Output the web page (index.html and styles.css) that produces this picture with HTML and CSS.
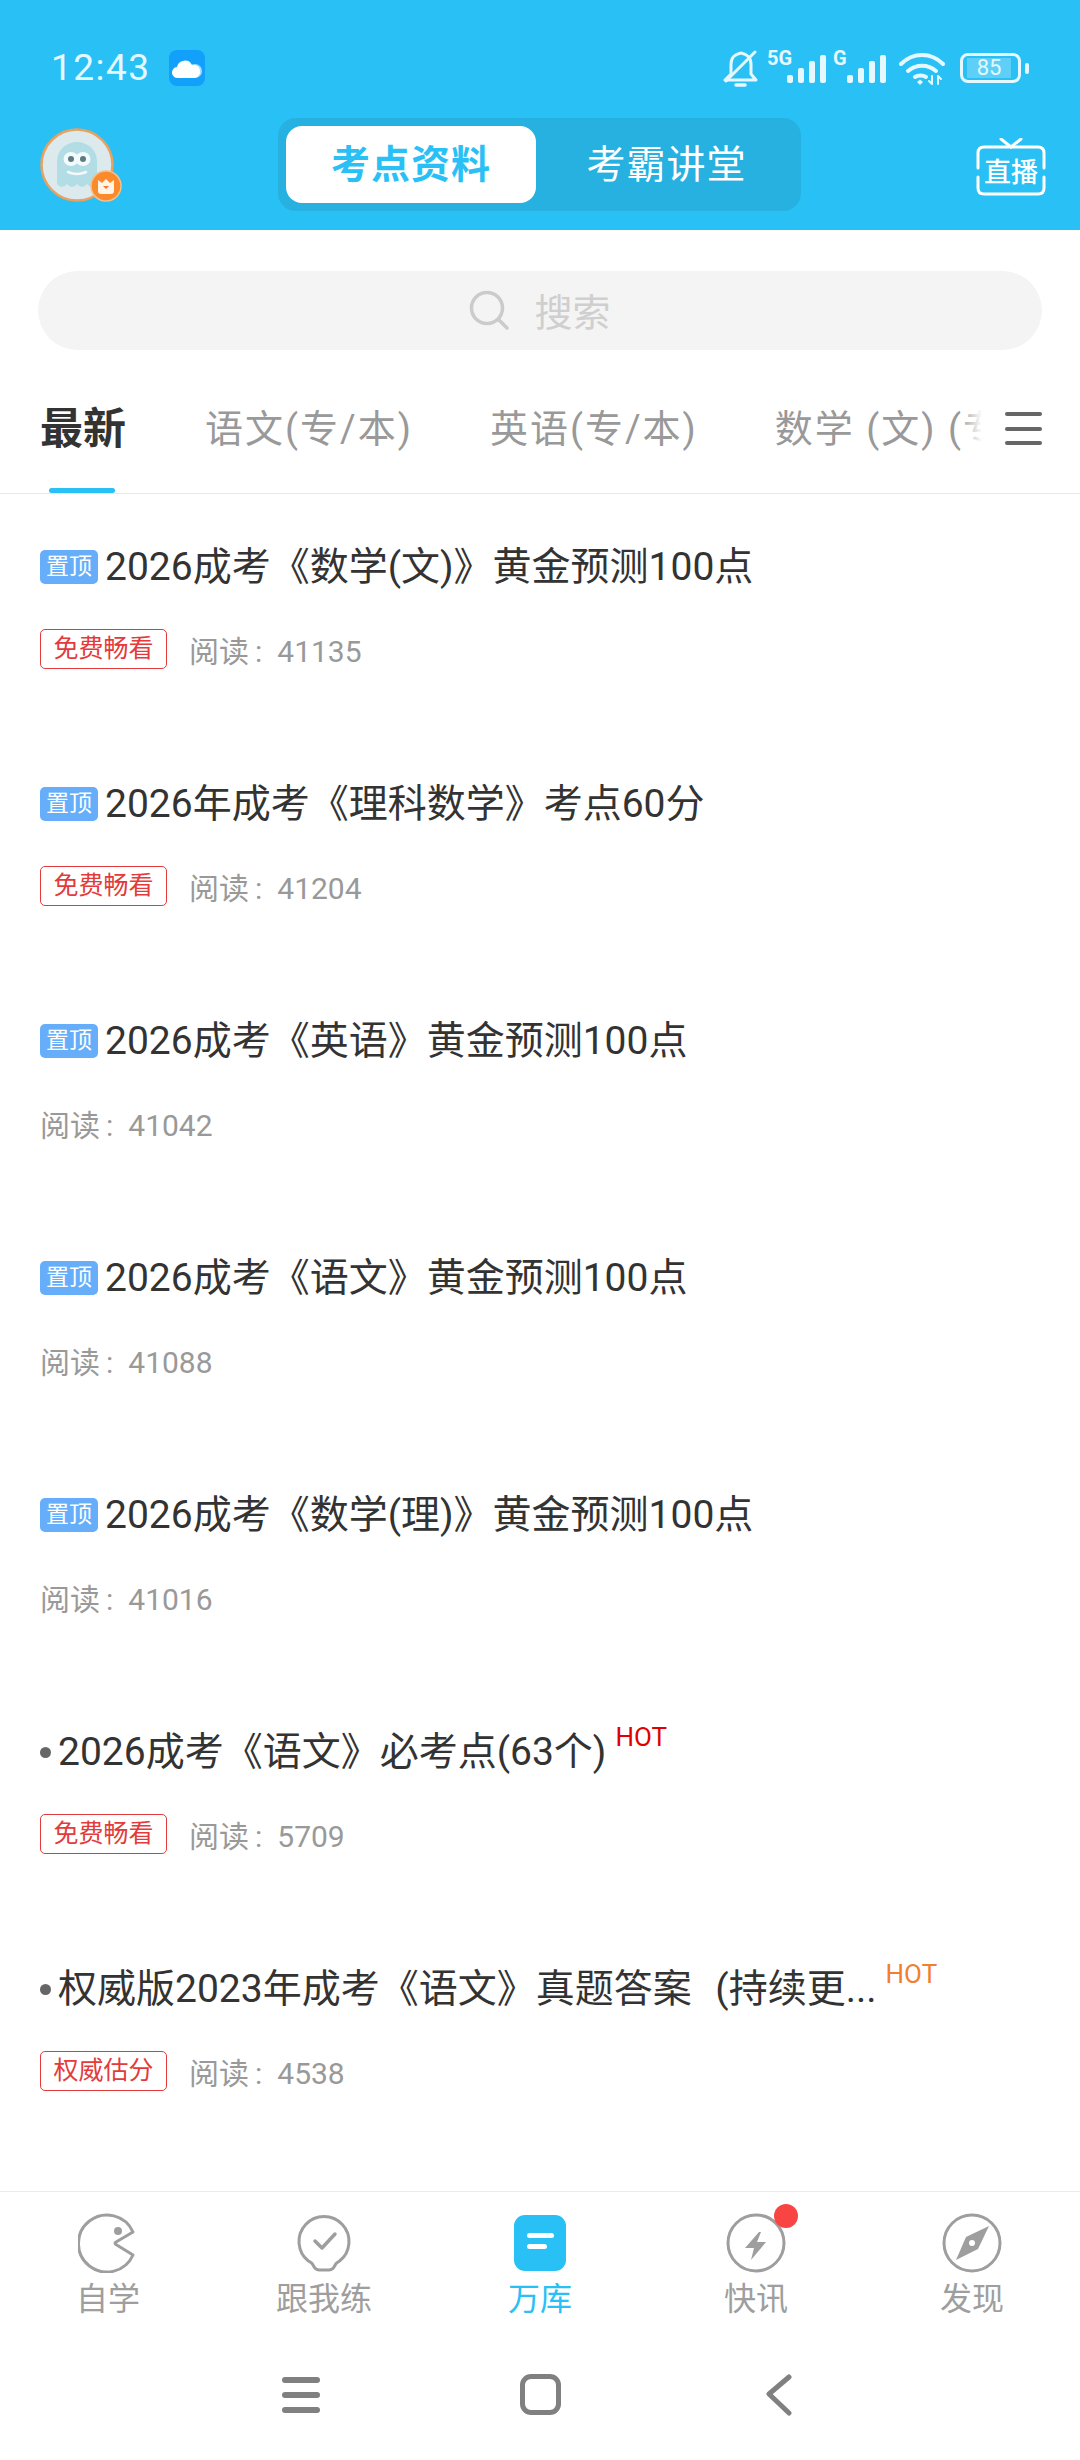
FILE: index.html
```html
<!DOCTYPE html>
<html lang="zh-CN">

<head>
    <meta charset="UTF-8">
    <meta name="viewport" content="width=device-width, initial-scale=1.0">
    <title>万库</title>
    <link rel="stylesheet" href="styles.css">
</head>

<body>
    <div class="app">
        <header class="top">
            <div class="status">
                <div class="status-left">
                    <span class="time">12:43</span>
                    <svg width="36" height="36" viewBox="0 0 36 36">
                        <rect width="36" height="36" rx="8" fill="#12a0fb" />
                        <circle cx="26" cy="21" r="7" fill="#a8dcfb" />
                        <path d="M9 28a5.500 5.500 0 0 1-1-11 8 8 0 0 1 15-2 6.500 6.500 0 0 1 3 13z" fill="#fff" />
                    </svg>
                </div>
                <div class="status-right">
                    <svg class="bell" width="36" height="38" viewBox="0 0 36 38" fill="none" stroke="#e6f8ff" stroke-width="3" stroke-linecap="round" stroke-linejoin="round">
                        <path d="M2 30h31l-5-6V14C28 8 24 4 18 3 12 4 8 8 8 14v10z" />
                        <path d="M32 2L3 31" />
                        <path d="M13 35h9" stroke-width="3.500" />
                    </svg>
                    <div class="signal wide">
                        <span class="net">5G</span>
                        <i class="b1"></i><i class="b2"></i><i class="b3"></i><i class="b4"></i>
                    </div>
                    <div class="signal">
                        <span class="net">G</span>
                        <i class="b1"></i><i class="b2"></i><i class="b3"></i><i class="b4"></i>
                    </div>
                    <svg class="wifi" width="46" height="34" viewBox="0 0 46 34" fill="none" stroke="#e6f8ff" stroke-width="4" stroke-linecap="round">
                        <path d="M2 12c12-12 30-12 42 0" />
                        <path d="M9 19c8-7 20-7 28 0" />
                        <path d="M16 25c3-2 8-2 11 0" />
                        <path d="M18 30l3-2.500 3 2.500-3 3z" fill="#e6f8ff" stroke="none" />
                        <path d="M33 24v8M30 29l3 3 M39 32v-8M39 24l3 3" stroke-width="2" />
                    </svg>
                    <div class="battery">
                        <div class="battery-body"><span class="battery-fill">85</span></div>
                        <div class="battery-cap"></div>
                    </div>
                </div>
            </div>
            <div class="nav">
                <div class="avatar">
                    <svg width="74" height="74" viewBox="0 0 74 74">
                        <circle cx="37" cy="37" r="35.500" fill="#dceaee" stroke="#e8a15e" stroke-width="2.500" />
                        <path d="M17 33a20 19 0 0 1 40 0V56q-5 6-10 0-5 6-10 0-5 6-10 0-5 6-10 0z" fill="#b2dde5" />
                        <ellipse cx="31" cy="31" rx="7.500" ry="7" fill="#f3fafb" />
                        <ellipse cx="43" cy="31" rx="7.500" ry="7" fill="#f3fafb" />
                        <circle cx="31" cy="31" r="3" fill="#5f7a82" />
                        <circle cx="43" cy="31" r="3" fill="#5f7a82" />
                        <path d="M28 44q9 4 18 0" fill="none" stroke="#f3fafb" stroke-width="2.500" stroke-linecap="round" />
                    </svg>
                    <svg class="crown" width="32" height="32" viewBox="0 0 32 32">
                        <circle cx="16" cy="16" r="15" fill="#fb8a2a" stroke="#f3c08f" stroke-width="1.500" />
                        <path d="M8 10l4 3 4-4 4 4 4-3v11q0 3-3 3H11q-3 0-3-3z" fill="#fff4e6" />
                        <path d="M13 16h6l-3 3z" fill="#f2753a" />
                    </svg>
                </div>
                <div class="switch">
                    <div class="switch-item active">考点资料</div>
                    <div class="switch-item">考霸讲堂</div>
                </div>
                <svg class="live" width="70" height="58" viewBox="0 0 70 58" fill="none" stroke="#fff" stroke-width="3" stroke-linecap="round">
                    <path d="M2 30V15q0-6 6-6h54q6 0 6 6v15" />
                    <path d="M2 39v11q0 6 6 6h54q6 0 6-6V39" />
                    <path d="M25 1l10 8 10-8" />
                    <text x="35" y="44" text-anchor="middle" class="live-text">直播</text>
                </svg>
            </div>
        </header>

        <div class="search-wrap">
            <div class="search">
                <svg width="40" height="40" viewBox="0 0 40 40" fill="none" stroke="#cbcbcb" stroke-width="3.500" stroke-linecap="round">
                    <circle cx="18" cy="18" r="15.500" />
                    <path d="M30 30l8 8" />
                </svg>
                <span>搜索</span>
            </div>
        </div>

        <div class="tabs">
            <div class="tab-scroll">
                <div class="tab active">最新</div>
                <div class="tab">语文(专/本)</div>
                <div class="tab">英语(专/本)</div>
                <div class="tab">数学 (文) (专/本)</div>
            </div>
            <div class="tab-fade"></div>
            <div class="tab-menu"><i></i><i></i><i></i></div>
        </div>

        <main class="list" id="list"></main>

        <nav class="bottom">
            <div class="bottom-item">
                <svg width="60" height="60" viewBox="0 0 60 60" fill="none" stroke="#9e9e9e" stroke-width="3" stroke-linejoin="round" stroke-linecap="round">
                    <path d="M55 19A28.500 28.500 0 1 0 55 42L38 31.500q-2-1.500 0-2.500z" />
                    <circle cx="40" cy="18" r="4" fill="#9e9e9e" stroke="none" />
                </svg>
                <span>自学</span>
            </div>
            <div class="bottom-item">
                <svg width="60" height="60" viewBox="0 0 60 60" fill="none" stroke="#9e9e9e" stroke-width="3" stroke-linecap="round" stroke-linejoin="round">
                    <path d="M14.400 48A25 25 0 1 1 45.600 48q-4 2-5 5q-2 4-6 4h-9q-4 0-6-4q-1-3-5-5z" />
                    <path d="M21 28l7 7L41 21" stroke-width="3.500" />
                </svg>
                <span>跟我练</span>
            </div>
            <div class="bottom-item current">
                <svg width="60" height="60" viewBox="0 0 60 60">
                    <rect x="4" y="2" width="52" height="56" rx="11" fill="#29c0f5" />
                    <rect x="17" y="20" width="27" height="5" rx="2.500" fill="#fff" />
                    <rect x="17" y="31" width="20" height="5" rx="2.500" fill="#fff" />
                </svg>
                <span>万库</span>
            </div>
            <div class="bottom-item">
                <div class="icon-wrap">
                    <svg width="60" height="60" viewBox="0 0 60 60" fill="none" stroke="#9e9e9e" stroke-width="3">
                        <circle cx="30" cy="30" r="28" />
                        <path d="M33 19L19 35h9L25 47 40 29h-9l4-10z" fill="#9e9e9e" stroke="none" />
                    </svg>
                    <div class="dot"></div>
                </div>
                <span>快讯</span>
            </div>
            <div class="bottom-item">
                <svg width="60" height="60" viewBox="0 0 60 60" fill="none" stroke="#9e9e9e" stroke-width="3">
                    <circle cx="30" cy="30" r="28" />
                    <path d="M47 13L36 36 14 47l10-23z" fill="#9e9e9e" stroke="none" />
                    <circle cx="30" cy="30" r="3" fill="#fff" stroke="none" />
                </svg>
                <span>发现</span>
            </div>
        </nav>

        <div class="sysbar">
            <div class="sys-menu"><i></i><i></i><i></i></div>
            <div class="sys-home"></div>
            <svg width="26" height="42" viewBox="0 0 26 42" fill="none" stroke="#808080" stroke-width="5" stroke-linecap="round" stroke-linejoin="round">
                <path d="M23 3L3 20l20 19" />
            </svg>
        </div>
    </div>

    <script>
        let items = [
            { pin: true, title: "2026成考《数学(文)》黄金预测100点", tag: "免费畅看", reads: 41135 },
            { pin: true, title: "2026年成考《理科数学》考点60分", tag: "免费畅看", reads: 41204 },
            { pin: true, title: "2026成考《英语》黄金预测100点", reads: 41042 },
            { pin: true, title: "2026成考《语文》黄金预测100点", reads: 41088 },
            { pin: true, title: "2026成考《数学(理)》黄金预测100点", reads: 41016 },
            { title: "2026成考《语文》必考点(63个)", hot: "red", tag: "免费畅看", reads: 5709 },
            { title: "权威版2023年成考《语文》真题答案 (持续更...", hot: "orange", tag: "权威估分", reads: 4538 }
        ];

        let list = document.getElementById("list");
        items.forEach((item) => {
            let row = document.createElement("div");
            row.className = "row";
            row.innerHTML = `
                <div class="row-title">
                    ${item.pin ? '<span class="pin">置顶</span>' : '<span class="bullet"></span>'}
                    <span class="title-text">${item.title}</span>
                    ${item.hot ? `<span class="hot ${item.hot}">HOT</span>` : ""}
                </div>
                <div class="row-meta">
                    ${item.tag ? `<span class="tag">${item.tag}</span>` : ""}
                    <span class="reads">阅读<span class="colon">:</span>${item.reads}</span>
                </div>
            `;
            list.appendChild(row);
        });
    </script>
</body>

</html>
```

FILE: styles.css
```css
* {
    box-sizing: border-box;
}

body {
    margin: 0;
    background: #fff;
    font-family: "Roboto", "Noto Sans CJK SC", sans-serif;
}

.app {
    width: 1080px;
    height: 2460px;
    display: flex;
    flex-direction: column;
    overflow: hidden;
}

.top {
    height: 230px;
    background: #29c0f5;
    flex-shrink: 0;
}

.status {
    height: 118px;
    padding: 50px 51px 0 51px;
    display: flex;
    justify-content: space-between;
    align-items: flex-start;
}

.status-left {
    display: flex;
    align-items: center;
    gap: 18px;
}

.time {
    color: #e6f8ff;
    font-size: 37px;
    line-height: 36px;
    letter-spacing: 1.500px;
}

.status-right {
    display: flex;
    align-items: flex-start;
    height: 38px;
}

.signal {
    width: 53px;
    height: 31px;
    margin: 2px 0 0 7px;
    display: flex;
    align-items: flex-end;
    justify-content: flex-end;
    gap: 5px;
    position: relative;
}

.signal.wide {
    width: 59px;
    margin-left: 8px;
}

.net {
    position: absolute;
    left: 0;
    top: -4px;
    color: #e6f8ff;
    font-size: 20px;
    line-height: 20px;
    font-weight: 700;
}

.signal i {
    width: 6px;
    background: #e6f8ff;
    border-radius: 2px;
}

.b1 { height: 8px; }
.b2 { height: 15px; }
.b3 { height: 22px; }
.b4 { height: 28px; }

.wifi {
    margin: 2px 0 0 13px;
}

.battery {
    margin: 3px 0 0 15px;
    display: flex;
    align-items: center;
    gap: 4px;
}

.battery-body {
    width: 61px;
    height: 30px;
    border: 3px solid #e6f8ff;
    border-radius: 8px;
    padding: 2px 7px 2px 4px;
    display: flex;
}

.battery-fill {
    flex: 1;
    background: rgba(255, 255, 255, 0.25);
    color: #e6f8ff;
    font-size: 22px;
    line-height: 20px;
    text-align: center;
}

.battery-cap {
    width: 4px;
    height: 11px;
    background: #e6f8ff;
    border-radius: 2px;
}

.nav {
    height: 112px;
    padding: 0 34px 0 40px;
    display: flex;
    align-items: flex-start;
    justify-content: space-between;
}

.avatar {
    width: 74px;
    height: 74px;
    margin-top: 10px;
    position: relative;
}

.crown {
    position: absolute;
    left: 50px;
    top: 42px;
}

.switch {
    width: 523px;
    height: 93px;
    padding: 8px;
    margin-right: 11px;
    background: #26b1e0;
    border-radius: 18px;
    display: flex;
}

.switch-item {
    color: #fff;
    font-size: 39px;
    line-height: 79px;
    text-align: center;
    letter-spacing: 1px;
    flex: 1;
    padding-left: 4px;
}

.switch-item.active {
    flex: none;
    width: 250px;
    padding-left: 0;
    background: #fff;
    color: #29c0f5;
    font-weight: 700;
    border-radius: 16px;
}

.live {
    margin-top: 20px;
}

.live-text {
    fill: #fff;
    stroke: none;
    font-size: 27px;
    font-weight: 500;
}

.search-wrap {
    padding: 41px 38px 0;
    flex-shrink: 0;
}

.search {
    height: 79px;
    background: #f4f4f4;
    border-radius: 40px;
    display: flex;
    align-items: center;
    justify-content: center;
    gap: 25px;
    color: #cfcfcf;
    font-size: 38px;
    padding-bottom: 2px;
}

.tabs {
    height: 144px;
    border-bottom: 1px solid #e8e8e8;
    display: flex;
    position: relative;
    flex-shrink: 0;
}

.tab-scroll {
    width: 982px;
    display: flex;
    align-items: flex-start;
    padding-left: 40px;
    gap: 77px;
    overflow: hidden;
}

.tab {
    color: #999;
    font-size: 38px;
    line-height: 50px;
    letter-spacing: 2px;
    margin-top: 54px;
    white-space: nowrap;
    position: relative;
    height: 89px;
}

.tab.active {
    color: #333;
    font-size: 43px;
    letter-spacing: 0;
    font-weight: 700;
    margin-right: 2px;
}

.tab.active::after {
    content: "";
    position: absolute;
    left: 9px;
    width: 66px;
    bottom: 0;
    height: 5px;
    background: #29c0f5;
    border-radius: 3px;
}

.tab-fade {
    position: absolute;
    left: 960px;
    top: 0;
    bottom: 0;
    width: 22px;
    background: linear-gradient(to right, rgba(255, 255, 255, 0), #fff);
}

.tab-menu {
    position: absolute;
    left: 1005px;
    top: 62px;
    width: 37px;
    height: 33px;
    display: flex;
    flex-direction: column;
    justify-content: space-between;
}

.tab-menu i {
    height: 4px;
    background: #666;
    border-radius: 2px;
}

.list {
    flex: 1;
}

.row {
    height: 237px;
    padding: 48px 38px 0 40px;
}

.row-title {
    height: 50px;
    display: flex;
    align-items: center;
    white-space: nowrap;
}

.pin {
    width: 58px;
    height: 34px;
    background: #66aefa;
    color: #fff;
    border-radius: 5px;
    font-size: 23px;
    line-height: 34px;
    text-align: center;
    margin-right: 7px;
}

.bullet {
    width: 11px;
    height: 11px;
    background: #666;
    border-radius: 50%;
    margin-right: 7px;
}

.title-text {
    color: #333;
    font-size: 39px;
    line-height: 50px;
    word-spacing: 14px;
}

.hot {
    font-size: 26px;
    line-height: 30px;
    align-self: flex-start;
    margin: -5px 0 0 9px;
}

.hot.red {
    color: #e00000;
}

.hot.orange {
    color: #f08030;
}

.row-meta {
    margin-top: 37px;
    height: 40px;
    display: flex;
    align-items: center;
}

.tag {
    width: 127px;
    height: 40px;
    border: 1px solid #e33b3b;
    border-radius: 5px;
    color: #e33b3b;
    font-size: 25px;
    line-height: 37px;
    text-align: center;
    margin-right: 22px;
}

.reads {
    color: #999;
    font-size: 30px;
}

.colon {
    margin: 0 15px 0 6px;
}

.bottom {
    height: 149px;
    border-top: 1px solid #ececec;
    display: flex;
    padding-top: 21px;
    flex-shrink: 0;
}

.bottom-item {
    width: 216px;
    display: flex;
    flex-direction: column;
    align-items: center;
    color: #9e9e9e;
    font-size: 32px;
}

.bottom-item span {
    line-height: 44px;
    margin-top: 4px;
}

.bottom-item.current {
    color: #29c0f5;
}

.icon-wrap {
    position: relative;
    height: 60px;
}

.dot {
    position: absolute;
    left: 48px;
    top: -9px;
    width: 24px;
    height: 24px;
    background: #f94444;
    border-radius: 50%;
}

.sysbar {
    height: 120px;
    display: grid;
    grid-template-columns: repeat(3, 239px);
    justify-content: center;
    justify-items: center;
    align-items: start;
    padding-top: 34px;
    flex-shrink: 0;
}

.sys-menu {
    width: 38px;
    height: 36px;
    margin-top: 3px;
    display: flex;
    flex-direction: column;
    justify-content: space-between;
}

.sys-menu i {
    height: 6px;
    background: #808080;
    border-radius: 3px;
}

.sys-home {
    width: 41px;
    height: 41px;
    border: 5px solid #808080;
    border-radius: 11px;
}
```
